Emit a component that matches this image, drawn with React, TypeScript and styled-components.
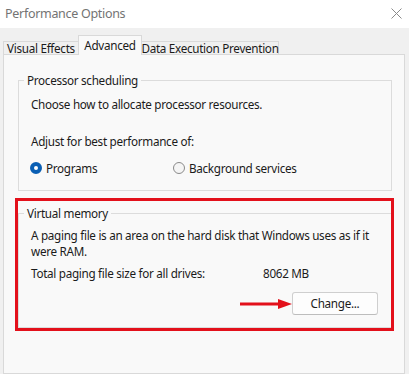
import React from 'react';
import styled, { createGlobalStyle } from 'styled-components';

const GlobalStyle = createGlobalStyle`
  html, body {
    margin: 0;
    padding: 0;
    background: #f0f0f0;
  }
  body {
    font-family: 'Noto Sans', 'Open Sans', sans-serif;
    font-size: 11.7px;
    letter-spacing: -0.3px;
    color: #1b1b1b;
  }
`;

const Window = styled.div`
  width: 409px;
  height: 374px;
  overflow: hidden;
  display: flex;
  flex-direction: column;
  background: #f0f0f0;
`;

const TitleBar = styled.div`
  height: 28px;
  flex-shrink: 0;
  background: #ffffff;
  display: flex;
  align-items: center;
  justify-content: space-between;
  padding: 0 6px 2px 5px;
  box-sizing: border-box;
`;

const Title = styled.span`
  font-size: 12.5px;
  color: #737373;
`;

const CloseIcon = styled.svg`
  width: 11px;
  height: 11px;
  margin-right: 1px;
`;

const Body = styled.div`
  flex: 1;
  display: flex;
  flex-direction: column;
  padding: 8px 4px 0 3px;
`;

const TabRow = styled.div`
  display: flex;
  align-items: flex-end;
  height: 19px;
  position: relative;
  z-index: 1;
`;

const Tab = styled.div<{ $active?: boolean; $width: number }>`
  width: ${(p) => p.$width}px;
  height: ${(p) => (p.$active ? 20 : 14)}px;
  box-sizing: border-box;
  border: 1px solid #d9d9d9;
  border-bottom: ${(p) => (p.$active ? 'none' : '1px solid #d9d9d9')};
  margin-left: -1px;
  background: ${(p) => (p.$active ? '#f9f9f9' : '#f0f0f0')};
  display: flex;
  align-items: center;
  justify-content: center;
  padding-bottom: ${(p) => (p.$active ? 2 : 0)}px;
  white-space: nowrap;
  font-size: 11.7px;
  &:first-child {
    margin-left: 0;
  }
`;

const Panel = styled.div`
  flex: 1;
  margin-top: -1px;
  border: 1px solid #d9d9d9;
  background: #f9f9f9;
  padding: 17px 12px 0 14px;
  display: flex;
  flex-direction: column;
`;

const GroupBox = styled.fieldset<{ $bottom: number; $top: number }>`
  margin: 0;
  border: 1px solid #dcdcdc;
  padding: ${(p) => p.$top}px 12px ${(p) => p.$bottom}px 12px;
  display: flex;
  flex-direction: column;
  min-width: 0;
`;

const Legend = styled.legend`
  padding: 0 3px;
  margin-left: -7px;
  line-height: 16px;
`;

const Line = styled.div<{ $gap?: number }>`
  line-height: 16px;
  white-space: nowrap;
  margin-top: ${(p) => p.$gap ?? 0}px;
`;

const RadioRow = styled.div`
  display: flex;
  margin-top: 11px;
  margin-left: -1px;
  line-height: 16px;
`;

const RadioItem = styled.label<{ $width?: number }>`
  display: flex;
  align-items: center;
  gap: 4px;
  width: ${(p) => (p.$width ? `${p.$width}px` : 'auto')};
`;

const RadioDot = styled.span<{ $checked?: boolean }>`
  width: 12px;
  height: 12px;
  border-radius: 50%;
  box-sizing: border-box;
  flex-shrink: 0;
  background: ${(p) => (p.$checked ? '#ffffff' : '#f5f5f5')};
  border: ${(p) => (p.$checked ? '4px solid #0a5fb4' : '1px solid #8a8a8a')};
`;

const Highlight = styled.div`
  position: relative;
  margin-top: 14px;
`;

const RedFrame = styled.div`
  position: absolute;
  top: -7px;
  left: -3px;
  right: -2px;
  bottom: -3px;
  border: 3px solid #e3101b;
  pointer-events: none;
`;

const InfoRow = styled.div`
  display: grid;
  grid-template-columns: 232px auto;
  line-height: 16px;
  margin-top: 6px;
  white-space: nowrap;
`;

const ButtonRow = styled.div`
  display: flex;
  justify-content: flex-end;
  align-items: center;
  margin-top: 11px;
  margin-right: 1px;
`;

const Arrow = styled.svg`
  width: 52px;
  height: 10px;
  display: block;
`;

const Button = styled.button`
  width: 86px;
  height: 23px;
  box-sizing: border-box;
  background: #fdfdfd;
  border: 1px solid #cfcfcf;
  border-bottom-color: #bdbdbd;
  border-radius: 3px;
  font-family: inherit;
  font-size: inherit;
  letter-spacing: inherit;
  color: #1b1b1b;
  padding: 0 0 1px;
`;

export default function App() {
  return (
    <>
      <GlobalStyle />
      <Window>
        <TitleBar>
          <Title>Performance Options</Title>
          <CloseIcon viewBox="0 0 11 11">
            <path d="M0.5 0.5 L10.5 10.5 M10.5 0.5 L0.5 10.5" stroke="#8a8a8a" strokeWidth="1" fill="none" />
          </CloseIcon>
        </TitleBar>
        <Body>
          <TabRow>
            <Tab $width={76}>Visual Effects</Tab>
            <Tab $width={64} $active>Advanced</Tab>
            <Tab $width={138}>Data Execution Prevention</Tab>
          </TabRow>
          <Panel>
            <GroupBox $top={8} $bottom={14}>
              <Legend>Processor scheduling</Legend>
              <Line>Choose how to allocate processor resources.</Line>
              <Line $gap={21}>Adjust for best performance of:</Line>
              <RadioRow>
                <RadioItem $width={143}>
                  <RadioDot $checked />
                  Programs
                </RadioItem>
                <RadioItem>
                  <RadioDot />
                  Background services
                </RadioItem>
              </RadioRow>
            </GroupBox>
            <Highlight>
              <GroupBox $top={6} $bottom={12}>
                <Legend>Virtual memory</Legend>
                <Line>
                  A paging file is an area on the hard disk that Windows uses as if it
                  <br />
                  were RAM.
                </Line>
                <InfoRow>
                  <span>Total paging file size for all drives:</span>
                  <span>8062 MB</span>
                </InfoRow>
                <ButtonRow>
                  <Arrow viewBox="0 0 52 10">
                    <line x1="0" y1="5" x2="42" y2="5" stroke="#e3101b" strokeWidth="3" />
                    <polygon points="38,0 52,5 38,10" fill="#e3101b" />
                  </Arrow>
                  <Button>Change...</Button>
                </ButtonRow>
              </GroupBox>
              <RedFrame />
            </Highlight>
          </Panel>
        </Body>
      </Window>
    </>
  );
}
